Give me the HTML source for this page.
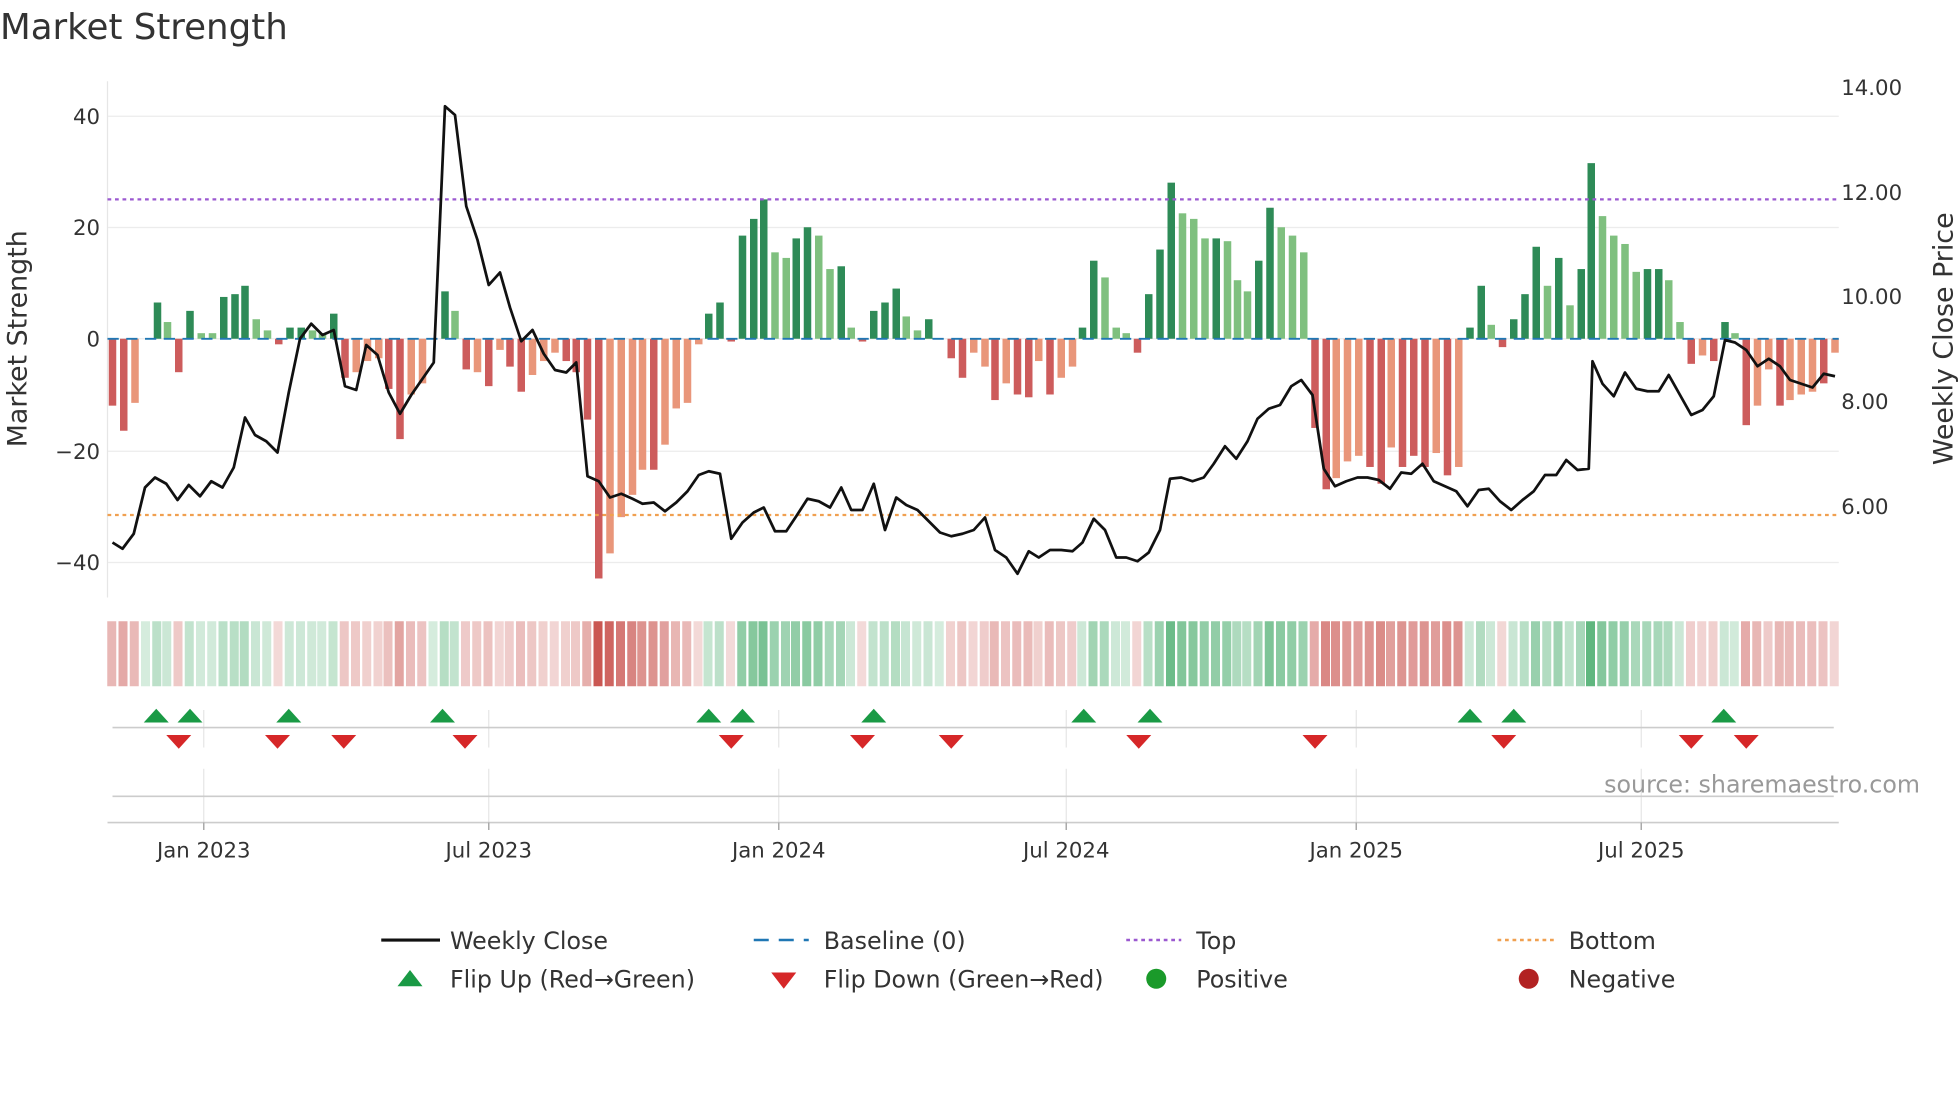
<!DOCTYPE html>
<html><head><meta charset="utf-8"><style>html,body{margin:0;padding:0;background:#fff;overflow:hidden}svg{display:block}text{font-family:"DejaVu Sans","Liberation Sans",sans-serif;fill:#333}</style></head>
<body>
<svg id="s" width="1960" height="1102" viewBox="0 0 1568 881.6" xmlns="http://www.w3.org/2000/svg">
<text x="0" y="31" font-size="28.5">Market Strength</text>
<g stroke="#ececec" stroke-width="1">
<line x1="86" y1="93" x2="1471" y2="93"/><line x1="86" y1="182" x2="1471" y2="182"/><line x1="86" y1="271" x2="1471" y2="271"/><line x1="86" y1="361" x2="1471" y2="361"/><line x1="86" y1="450" x2="1471" y2="450"/>
</g>
<line x1="86" y1="65" x2="86" y2="478" stroke="#e6e6e6"/>
<g font-size="17" text-anchor="end">
<text x="80" y="99">40</text><text x="80" y="188">20</text><text x="80" y="277">0</text><text x="80" y="367">−20</text><text x="80" y="456">−40</text>
</g>
<g font-size="17">
<text x="1473" y="76">14.00</text><text x="1473" y="160">12.00</text><text x="1473" y="243">10.00</text><text x="1473" y="327">8.00</text><text x="1473" y="411">6.00</text>
</g>
<text transform="translate(21,271) rotate(-90)" font-size="21.5" text-anchor="middle">Market Strength</text>
<text transform="translate(1562,271) rotate(-90)" font-size="21.5" text-anchor="middle">Weekly Close Price</text>
<g id="bars"></g>
<line x1="86" y1="271" x2="1471" y2="271" stroke="#1f77b4" stroke-width="1.5" stroke-dasharray="9,6"/>
<line x1="86" y1="159.5" x2="1471" y2="159.5" stroke="#9b59d0" stroke-width="1.8" stroke-dasharray="3,3"/>
<line x1="86" y1="412" x2="1471" y2="412" stroke="#f0a050" stroke-width="1.8" stroke-dasharray="3,3"/>
<polyline id="price" fill="none" stroke="#111" stroke-width="2.2" stroke-linejoin="round"/>
<g id="strip"></g>
<g stroke="#e6e6e6" stroke-width="1">
<line x1="163" y1="568" x2="163" y2="598"/><line x1="391" y1="568" x2="391" y2="598"/><line x1="623" y1="568" x2="623" y2="598"/><line x1="853" y1="568" x2="853" y2="598"/><line x1="1085" y1="568" x2="1085" y2="598"/><line x1="1313" y1="568" x2="1313" y2="598"/>
<line x1="163" y1="615" x2="163" y2="658"/><line x1="391" y1="615" x2="391" y2="658"/><line x1="623" y1="615" x2="623" y2="658"/><line x1="853" y1="615" x2="853" y2="658"/><line x1="1085" y1="615" x2="1085" y2="658"/><line x1="1313" y1="615" x2="1313" y2="658"/>
</g>
<line x1="90" y1="582" x2="1467" y2="582" stroke="#ccc" stroke-width="1.3"/>
<line x1="90" y1="637" x2="1467" y2="637" stroke="#ccc" stroke-width="1.3"/>
<line x1="86" y1="658" x2="1471" y2="658" stroke="#ccc" stroke-width="1.3"/>
<g id="marks"></g>
<g stroke="#aaa" stroke-width="1.2"><line x1="163" y1="658" x2="163" y2="664"/><line x1="391" y1="658" x2="391" y2="664"/><line x1="623" y1="658" x2="623" y2="664"/><line x1="853" y1="658" x2="853" y2="664"/><line x1="1085" y1="658" x2="1085" y2="664"/><line x1="1313" y1="658" x2="1313" y2="664"/></g>
<g font-size="17" text-anchor="middle">
<text x="163" y="686">Jan 2023</text><text x="391" y="686">Jul 2023</text><text x="623" y="686">Jan 2024</text><text x="853" y="686">Jul 2024</text><text x="1085" y="686">Jan 2025</text><text x="1313" y="686">Jul 2025</text>
</g>
<text x="1536" y="634" font-size="19" text-anchor="end" style="fill:#999">source: sharemaestro.com</text>
<g font-size="19">
<line x1="305" y1="752" x2="352" y2="752" stroke="#111" stroke-width="2.5"/><text x="360" y="759">Weekly Close</text>
<line x1="603" y1="752" x2="647" y2="752" stroke="#1f77b4" stroke-width="2" stroke-dasharray="12,8"/><text x="659" y="759">Baseline (0)</text>
<line x1="901" y1="752" x2="945" y2="752" stroke="#9b59d0" stroke-width="2" stroke-dasharray="3,3"/><text x="957" y="759">Top</text>
<line x1="1198" y1="752" x2="1243" y2="752" stroke="#f0a050" stroke-width="2" stroke-dasharray="3,3"/><text x="1255" y="759">Bottom</text>
<polygon points="318,789 338,789 328,776" fill="#1a9a45"/><text x="360" y="790">Flip Up (Red→Green)</text>
<polygon points="617,778 637,778 627,791" fill="#d62728"/><text x="659" y="790">Flip Down (Green→Red)</text>
<circle cx="925" cy="783" r="8" fill="#1a9a2a"/><text x="957" y="790">Positive</text>
<circle cx="1223" cy="783" r="8" fill="#b22222"/><text x="1255" y="790">Negative</text>
</g>
</svg>
<script>
var NS="http://www.w3.org/2000/svg";
function el(t,a,p){var e=document.createElementNS(NS,t);for(var k in a)e.setAttribute(k,a[k]);document.getElementById(p).appendChild(e);}
var B=[[90,-12,1],[99,-16.5,1],[108,-11.5,0],[117,0,0],[126,6.5,1],[134,3,0],[143,-6,1],[152,5,1],[161,1,0],[170,1,0],[179,7.5,1],[188,8,1],[196,9.5,1],[205,3.5,0],[214,1.5,0],[223,-1,1],[232,2,1],[241,2,1],[250,1.5,0],[258,1,0],[267,4.5,1],[276,-7,1],[285,-6,0],[294,-4,0],[303,-3.5,0],[311,-9,1],[320,-18,1],[329,-10,0],[338,-8,0],[347,0,0],[356,8.5,1],[364,5,0],[373,-5.5,1],[382,-6,0],[391,-8.5,1],[400,-2,0],[408,-5,1],[417,-9.5,1],[426,-6.5,0],[435,-4,0],[444,-2.5,0],[453,-4,1],[461,-6,1],[470,-14.5,1],[479,-43,1],[488,-38.5,0],[497,-32,0],[506,-28,0],[514,-23.5,0],[523,-23.5,1],[532,-19,0],[541,-12.5,0],[550,-11.5,0],[559,-1,0],[567,4.5,1],[576,6.5,1],[585,-0.5,1],[594,18.5,1],[603,21.5,1],[611,25,1],[620,15.5,0],[629,14.5,0],[637,18,1],[646,20,1],[655,18.5,0],[664,12.5,0],[673,13,1],[681,2,0],[690,-0.5,1],[699,5,1],[708,6.5,1],[717,9,1],[725,4,0],[734,1.5,0],[743,3.5,1],[752,0,0],[761,-3.5,1],[770,-7,1],[779,-2.5,0],[788,-5,0],[796,-11,1],[805,-8,0],[814,-10,1],[823,-10.5,1],[831,-4,0],[840,-10,1],[849,-7,0],[858,-5,0],[866,2,1],[875,14,1],[884,11,0],[893,2,0],[901,1,0],[910,-2.5,1],[919,8,1],[928,16,1],[937,28,1],[946,22.5,0],[955,21.5,0],[964,18,0],[973,18,1],[982,17.5,0],[990,10.5,0],[998,8.5,0],[1007,14,1],[1016,23.5,1],[1025,20,0],[1034,18.5,0],[1043,15.5,0],[1052,-16,1],[1061,-27,1],[1069,-25,0],[1078,-22,0],[1087,-21,0],[1096,-23,1],[1105,-26,1],[1113,-19.5,0],[1122,-23,1],[1131,-21,1],[1140,-23,1],[1149,-20.5,0],[1158,-24.5,1],[1167,-23,0],[1176,2,1],[1185,9.5,1],[1193,2.5,0],[1202,-1.5,1],[1211,3.5,1],[1220,8,1],[1229,16.5,1],[1238,9.5,0],[1247,14.5,1],[1256,6,0],[1265,12.5,1],[1273,31.5,1],[1282,22,0],[1291,18.5,0],[1300,17,0],[1309,12,0],[1318,12.5,1],[1327,12.5,1],[1335,10.5,0],[1344,3,0],[1353,-4.5,1],[1362,-3,0],[1371,-4,1],[1380,3,1],[1388,1,0],[1397,-15.5,1],[1406,-12,0],[1415,-5.5,0],[1424,-12,1],[1432,-11,0],[1441,-10,0],[1450,-9.5,0],[1459,-8,1],[1468,-2.5,0]];
B.forEach(function(b,i){var v=b[1],h=Math.abs(v)*4.46,y=v>=0?271-h:271;
var c=v>=0?(b[2]?"#2e8b57":"#7fc07f"):(b[2]?"#cd5c5c":"#e9967a");
if(h>0.3)el("rect",{x:b[0]-3,y:y,width:6,height:h,fill:c},"bars");
var a=Math.min(1,0.2+Math.abs(v)/45*0.8);
var base=v>=0?[46,160,87]:[200,80,75];
el("rect",{x:b[0]-4.2,y:497,width:7.2,height:52,fill:"rgb("+base.join(",")+")","fill-opacity":a.toFixed(2)},"strip");});
var P=[90,434,98,439,107,427,116,390,124,382,133,387,142,400,151,388,160,397,169,385,178,390,187,374,196,334,204,348,213,353,222,362,231,314,240,271,249,259,258,268,267,264,276,309,285,312,293,276,302,284,311,314,320,331,329,316,338,303,347,290,356,85,364,92,373,165,382,192,391,228,400,218,408,246,417,273,426,264,435,283,444,296,453,298,461,290,470,381,479,385,488,398,497,395,506,399,514,403,523,402,532,409,541,402,550,393,559,380,567,377,576,379,585,431,594,418,603,410,611,406,620,425,629,425,637,413,646,399,655,401,664,406,673,390,681,408,690,408,699,387,708,424,717,398,725,404,734,408,743,417,752,426,761,429,770,427,779,424,788,414,796,440,805,446,814,459,823,441,831,446,840,440,849,440,858,441,866,434,875,415,884,424,893,446,901,446,910,449,919,442,928,424,936,383,945,382,954,385,963,382,971,371,980,357,989,367,998,353,1006,335,1015,327,1024,324,1033,309,1041,304,1050,316,1059,375,1068,389,1077,385,1086,382,1094,382,1103,384,1112,391,1121,378,1129,379,1138,371,1147,385,1156,389,1165,393,1174,405,1183,392,1191,391,1200,401,1209,408,1218,400,1227,393,1236,380,1245,380,1253,368,1262,376,1271,375,1274,289,1282,307,1291,317,1300,298,1309,311,1318,313,1327,313,1335,300,1344,316,1353,332,1362,328,1371,317,1380,272,1388,274,1397,280,1406,293,1415,287,1424,293,1432,304,1441,307,1450,310,1459,299,1468,301];
var s="";for(var i=0;i<P.length;i+=2)s+=P[i]+","+P[i+1]+" ";document.getElementById("price").setAttribute("points",s);
[125,152,231,354,567,594,699,867,920,1176,1211,1379].forEach(function(x){el("polygon",{points:(x-10)+",578 "+(x+10)+",578 "+x+",567",fill:"#1a9a45"},"marks");});
[143,222,275,372,585,690,761,911,1052,1203,1353,1397].forEach(function(x){el("polygon",{points:(x-10)+",588 "+(x+10)+",588 "+x+",599",fill:"#d62728"},"marks");});
</script>
</body></html>
